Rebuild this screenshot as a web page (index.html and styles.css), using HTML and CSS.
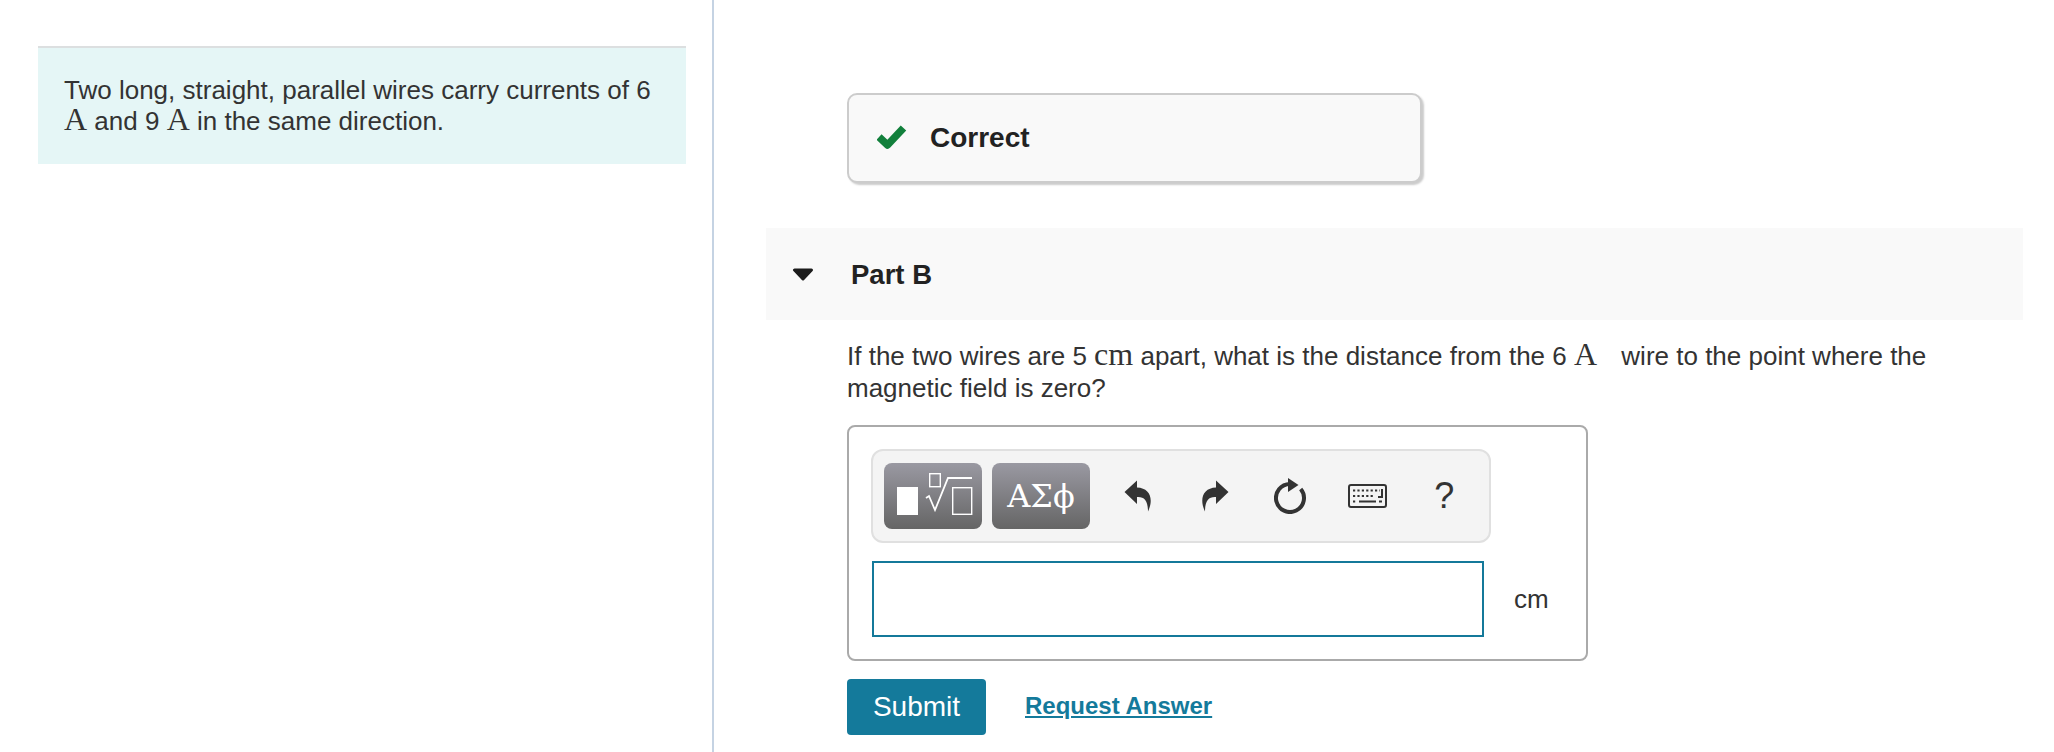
FILE: index.html
```html
<!DOCTYPE html>
<html lang="en">
<head>
  <meta charset="UTF-8">
  <meta name="viewport" content="width=device-width, initial-scale=1.0">
  <title>Part B</title>
  <link rel="stylesheet" href="styles.css">
</head>
<body>

<div class="page">
  <div class="left">
    <div class="intro">
      Two long, straight, parallel wires carry currents of 6 <span class="math">A</span> and 9 <span class="math">A</span> in the same direction.
    </div>
  </div>

  <div class="right">
    <div class="feedback">
      <svg class="check" width="30" height="24" viewBox="0 0 30 24">
        <path d="M2 12 L10.5 20 L26.5 3" fill="none" stroke="#12803c" stroke-width="7.5" stroke-linejoin="round"/>
      </svg>
      <span>Correct</span>
    </div>

    <div class="part-head">
      <svg class="caret" width="22" height="13" viewBox="0 0 22 13">
        <path d="M2.5 2 H19.5 L11 11 Z" fill="#1c1c1c" stroke="#1c1c1c" stroke-width="3" stroke-linejoin="round"/>
      </svg>
      <span>Part B</span>
    </div>

    <div class="part-body">
      <p class="question">If the two wires are 5 <span class="math">cm</span> apart, what is the distance from the 6 <span class="math">A</span> <span class="gap"></span>wire to the point where the magnetic field is zero?</p>

      <div class="editor">
        <div class="toolbar">
          <button class="tpl">
            <svg width="98" height="66" viewBox="0 0 98 66">
              <rect x="13" y="24" width="21" height="28" fill="#fff"/>
              <rect x="45.7" y="10.7" width="10.6" height="13" fill="none" stroke="#fff" stroke-width="1.4"/>
              <path d="M42 35 L45 33 L51 47 L64 15 H88" fill="none" stroke="#fff" stroke-width="1.8"/>
              <rect x="68.7" y="24.7" width="19" height="26.6" fill="none" stroke="#fff" stroke-width="1.4"/>
            </svg>
          </button>
          <button class="tpl greek">ΑΣϕ</button>

          <span class="tool">
            <svg width="28" height="32" viewBox="0 0 28 32">
              <path d="M13 0.5 L0.5 12 L13 24 V17 C20 16.5 24 20 24 31.5 C30 19 26 8 13 7.5 Z" fill="#333"/>
            </svg>
          </span>
          <span class="tool">
            <svg width="28" height="32" viewBox="0 0 28 32">
              <path d="M15 0.5 L27.5 12 L15 24 V17 C8 16.5 4 20 4 31.5 C-2 19 2 8 15 7.5 Z" fill="#333"/>
            </svg>
          </span>
          <span class="tool">
            <svg width="34" height="36" viewBox="0 0 34 36">
              <path d="M26.7 11 A14 14 0 1 1 16 6" fill="none" stroke="#333" stroke-width="4"/>
              <path d="M14 0 L24.5 7 L14 14 Z" fill="#333"/>
            </svg>
          </span>
          <span class="tool">
            <svg width="39" height="24" viewBox="0 0 39 24">
              <rect x="1" y="1" width="37" height="22" rx="2" fill="none" stroke="#333" stroke-width="2"/>
              <path d="M5 6.5 H32 M5 12 H27 M5 17.5 H8" fill="none" stroke="#333" stroke-width="2" stroke-dasharray="2.2 2.2"/>
              <path d="M11 17.5 H28 M31 17.5 H34 M34 5 V13 H30" fill="none" stroke="#333" stroke-width="2"/>
            </svg>
          </span>
          <span class="tool help">?</span>
        </div>

        <div class="answer-row">
          <input class="answer" type="text">
          <span class="unit">cm</span>
        </div>
      </div>

      <div class="actions">
        <button class="submit">Submit</button>
        <a class="request" href="#">Request Answer</a>
      </div>
    </div>
  </div>
</div>

</body>
</html>
```

FILE: styles.css
```css
html, body {
  margin: 0;
  padding: 0;
  height: 752px;
  overflow: hidden;
  background-color: #fff;
}
body {
  font-family: "Liberation Sans", Arial, sans-serif;
  font-size: 26px;
  line-height: 32px;
  color: #333;
}
.page {
  display: flex;
  height: 752px;
}
.left {
  width: 714px;
  flex-shrink: 0;
  box-sizing: border-box;
  padding: 46px 26px 0 38px;
  border-right: 2px solid #c5d3e3;
}
.intro {
  border-top: 2px solid #dcdfe0;
  background-color: #e5f6f6;
  padding: 27px 26px 27px;
  line-height: 31px;
}
.math {
  font-family: "Liberation Serif", "Times New Roman", serif;
  font-size: 32px;
  line-height: 0;
}
.right {
  flex: 1;
  padding: 93px 31px 0 52px;
  min-width: 0;
}
.feedback {
  display: flex;
  align-items: center;
  box-sizing: border-box;
  width: 575px;
  height: 90px;
  margin-left: 81px;
  padding-left: 28px;
  border: 2px solid #ccc;
  border-radius: 10px;
  background-color: #f9f9f9;
  box-shadow: 2px 2px 2px #ccc;
  font-size: 28px;
  font-weight: bold;
  color: #222;
}
.check {
  margin: -3px 23px 0 0;
}
.part-head {
  display: flex;
  align-items: center;
  box-sizing: border-box;
  height: 92px;
  margin-top: 45px;
  padding: 1px 0 0 26px;
  background-color: #f9f9f9;
  font-size: 27.5px;
  font-weight: bold;
  color: #222;
}
.caret {
  margin-right: 37px;
}
.part-body {
  padding-left: 81px;
}
.question {
  margin: 20px 0 0;
  max-width: 1120px;
}
.gap {
  display: inline-block;
  width: 17px;
}
.editor {
  box-sizing: border-box;
  width: 741px;
  height: 236px;
  margin-top: 21px;
  padding: 22px 0 0 23px;
  border: 2px solid #aaa;
  border-radius: 8px;
}
.toolbar {
  display: flex;
  align-items: center;
  gap: 10px;
  box-sizing: border-box;
  width: 620px;
  height: 94px;
  margin-left: -1px;
  padding-left: 11px;
  border: 2px solid #e0e0e0;
  border-radius: 12px;
  background-color: #f4f4f4;
}
.tpl {
  width: 98px;
  height: 66px;
  padding: 0;
  border: none;
  border-radius: 8px;
  background: linear-gradient(#9a99a2, #656565);
  color: #fff;
}
.tpl svg {
  display: block;
}
.greek {
  margin-right: 5px;
  font-family: "DejaVu Serif", serif;
  font-size: 32px;
}
.tool {
  display: flex;
  align-items: center;
  justify-content: center;
  width: 66.5px;
  color: #333;
}
.help {
  font-size: 36px;
}
.answer-row {
  display: flex;
  align-items: center;
  margin-top: 18px;
}
.answer {
  box-sizing: border-box;
  width: 612px;
  height: 76px;
  border: 2px solid #14799a;
  background-color: #fff;
}
.unit {
  margin-left: 30px;
}
.actions {
  display: flex;
  align-items: center;
  margin-top: 18px;
}
.submit {
  width: 139px;
  height: 56px;
  padding: 0;
  border: none;
  border-radius: 4px;
  background-color: #147a9b;
  color: #fff;
  font-family: "Liberation Sans", Arial, sans-serif;
  font-size: 28px;
}
.request {
  margin-left: 39px;
  padding-bottom: 2px;
  color: #147a9b;
  font-size: 24px;
  font-weight: bold;
}
```
